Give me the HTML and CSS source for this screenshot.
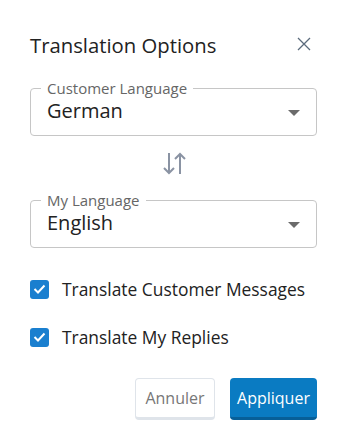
FILE: index.html
```html
<!DOCTYPE html>
<html lang="en">
<head>
    <meta charset="UTF-8">
    <meta name="viewport" content="width=device-width, initial-scale=1.0">
    <title>Translation Options</title>
    <link rel="stylesheet" href="styles.css">
</head>
<body>
    <div class="dialog">

        <div class="dialog-header">
            <h1>Translation Options</h1>
            <button class="close-button" aria-label="Close">
                <svg width="14" height="14" viewBox="0 0 14 14">
                    <path d="M1 1 L13 13 M13 1 L1 13" stroke="#5b6b7c" stroke-width="1.3" fill="none"/>
                </svg>
            </button>
        </div>

        <fieldset class="lang-field">
            <legend>Customer Language</legend>
            <div class="lang-select">
                <span>German</span>
                <svg class="caret" width="12" height="6" viewBox="0 0 12 6"><path d="M0 0 H12 L6 6 Z" fill="#6b6b6b"/></svg>
            </div>
        </fieldset>

        <div class="swap-row">
            <svg width="26" height="23" viewBox="0 0 26 23">
                <path d="M8 1 V21 M3 16 L8 21 L13 16" stroke="#8a93a3" stroke-width="2" fill="none"/>
                <path d="M19 22 V2 M14 7 L19 2 L24 7" stroke="#8a93a3" stroke-width="2" fill="none"/>
            </svg>
        </div>

        <fieldset class="lang-field">
            <legend>My Language</legend>
            <div class="lang-select">
                <span>English</span>
                <svg class="caret" width="12" height="6" viewBox="0 0 12 6"><path d="M0 0 H12 L6 6 Z" fill="#6b6b6b"/></svg>
            </div>
        </fieldset>

        <div class="options">
            <label class="check-row">
                <span class="checkbox">
                    <svg width="13" height="10" viewBox="0 0 13 10"><path d="M1.5 5 L5 8.5 L11.5 1.5" stroke="white" stroke-width="2" fill="none"/></svg>
                </span>
                Translate Customer Messages
            </label>
            <label class="check-row">
                <span class="checkbox">
                    <svg width="13" height="10" viewBox="0 0 13 10"><path d="M1.5 5 L5 8.5 L11.5 1.5" stroke="white" stroke-width="2" fill="none"/></svg>
                </span>
                Translate My Replies
            </label>
        </div>

        <div class="dialog-actions">
            <button class="btn btn-cancel">Annuler</button>
            <button class="btn btn-apply">Appliquer</button>
        </div>
    </div>
</body>
</html>
```

FILE: styles.css
```css
* {
    box-sizing: border-box;
    margin: 0;
    padding: 0;
}

body {
    font-family: "Open Sans", Arial, sans-serif;
    background: white;
    color: #333;
}

.dialog {
    width: 340px;
    padding: 31px 23px 21px 30px;
}

.dialog-header {
    display: flex;
    justify-content: space-between;
    align-items: center;
    height: 28px;
    margin-bottom: 20px;
}

.dialog-header h1 {
    font-size: 20.3px;
    font-weight: 400;
    line-height: 28px;
    color: #222;
}

.close-button {
    border: none;
    background: none;
    width: 14px;
    height: 14px;
    margin-right: 6px;
    margin-top: -2px;
    display: flex;
    cursor: pointer;
}

.lang-field {
    border: 1px solid #c6c6c6;
    border-radius: 4px;
    padding: 0 16px 12px 10px;
}

.lang-field legend {
    font-size: 15px;
    line-height: 18px;
    color: #666;
    padding: 0 6px;
}

.lang-select {
    display: flex;
    justify-content: space-between;
    align-items: center;
    padding: 2px 0 0 6px;
    font-size: 20px;
    line-height: 24px;
    color: #222;
}

.caret {
    margin-top: 3px;
}

.swap-row {
    display: flex;
    justify-content: center;
    padding: 16px 0;
}

.options {
    display: flex;
    flex-direction: column;
    gap: 26px;
    margin-top: 30px;
}

.check-row {
    display: flex;
    align-items: center;
    gap: 13px;
    font-size: 17.4px;
    line-height: 22px;
    color: #222;
}

.checkbox {
    width: 19px;
    height: 19px;
    border-radius: 3px;
    background: #1a7fcf;
    display: flex;
    align-items: center;
    justify-content: center;
}

.dialog-actions {
    display: flex;
    justify-content: flex-end;
    gap: 15px;
    margin-top: 30px;
}

.btn {
    font-family: "Open Sans", Arial, sans-serif;
    font-size: 16px;
    height: 42px;
    border-radius: 4px;
    cursor: pointer;
}

.btn-cancel {
    width: 80px;
    background: white;
    color: #777;
    border: 1px solid #dfe4ea;
    border-bottom: 3px solid #dfe4ea;
}

.btn-apply {
    width: 87px;
    background: #0a7bc2;
    color: white;
    border: none;
    border-bottom: 3px solid #075f98;
}
```
